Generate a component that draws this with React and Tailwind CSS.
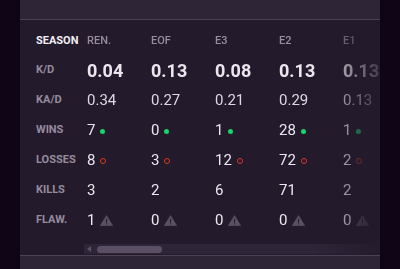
import React from 'react';

const seasons = [
  { name: 'REN.', kd: '0.04', kad: '0.34', wins: 7, losses: 8, kills: 3, flaw: 1 },
  { name: 'EOF', kd: '0.13', kad: '0.27', wins: 0, losses: 3, kills: 2, flaw: 0 },
  { name: 'E3', kd: '0.08', kad: '0.21', wins: 1, losses: 12, kills: 6, flaw: 0 },
  { name: 'E2', kd: '0.13', kad: '0.29', wins: 28, losses: 72, kills: 71, flaw: 0 },
  { name: 'E1', kd: '0.13', kad: '0.13', wins: 1, losses: 2, kills: 2, flaw: 0 },
];

const labels = ['K/D', 'KA/D', 'WINS', 'LOSSES', 'KILLS', 'FLAW.'];

function Warn() {
  return (
    <svg width="13" height="11" viewBox="0 0 13 11" className="ml-[5px]">
      <path d="M6.5 0.6 L12.6 10.6 L0.4 10.6 Z" fill="#5a5063" strokeLinejoin="round" stroke="#5a5063" strokeWidth="0.8" />
      <rect x="6" y="4" width="1" height="3.6" fill="#231a2c" />
      <rect x="6" y="8.4" width="1" height="1" fill="#231a2c" />
    </svg>
  );
}

function Column({ s }) {
  return (
    <div className="w-[64px] shrink-0 pl-[3px] text-[#ece7ef]">
      <div className="h-[27px] flex items-center text-[11px] font-medium text-[#978d9f]">{s.name}</div>
      <div className="h-[30px] flex items-center text-[18px] font-bold">{s.kd}</div>
      <div className="h-[30px] flex items-center text-[15px] text-[#ded8e2]">{s.kad}</div>
      <div className="h-[30px] flex items-center text-[15px]">
        {s.wins}
        <span className="ml-[5px] mt-[2px] w-[5px] h-[5px] rounded-full bg-[#19d46f]" />
      </div>
      <div className="h-[30px] flex items-center text-[15px]">
        {s.losses}
        <span className="ml-[5px] mt-[2px] w-[6px] h-[6px] rounded-full border-[1.5px] border-[#dd3a1d]" />
      </div>
      <div className="h-[30px] flex items-center text-[15px]">{s.kills}</div>
      <div className="h-[30px] flex items-center text-[15px]">
        {s.flaw}
        <Warn />
      </div>
    </div>
  );
}

export default function App() {
  return (
    <div className="h-[269px] bg-[#0f0516] flex justify-center overflow-hidden" style={{ fontFamily: 'Roboto, "Noto Sans", sans-serif' }}>
      <div className="w-[360px] flex flex-col bg-[#231a2c]">
        <div className="h-[20px] shrink-0 bg-[#2e2537] border-b border-[#4b4253]" />
        <div className="flex-1 flex pt-[8px] pl-[16px]">
          <div className="w-[48px] shrink-0 text-[11px] font-bold text-[#958b9d]">
            <div className="h-[27px] flex items-center text-[#f2eef4]">SEASON</div>
            {labels.map((l) => (
              <div key={l} className="h-[30px] flex items-center">{l}</div>
            ))}
          </div>
          <div className="flex-1 min-w-0 flex flex-col overflow-hidden [mask-image:linear-gradient(to_right,black_78%,transparent_104%)]">
            <div className="flex">
              {seasons.map((s) => (
                <Column key={s.name} s={s} />
              ))}
            </div>
            <div className="mt-[9px] h-[10px] bg-[#2e2538] flex items-center">
              <span className="ml-[3px] w-0 h-0 border-y-[3px] border-y-transparent border-r-[4px] border-r-[#5b4f65]" />
              <span className="ml-[6px] w-[65px] h-[7px] rounded-full bg-[#5b4f65]" />
            </div>
          </div>
        </div>
        <div className="h-[14px] shrink-0 bg-[#2e2537] border-t border-[#4b4253]" />
      </div>
    </div>
  );
}
